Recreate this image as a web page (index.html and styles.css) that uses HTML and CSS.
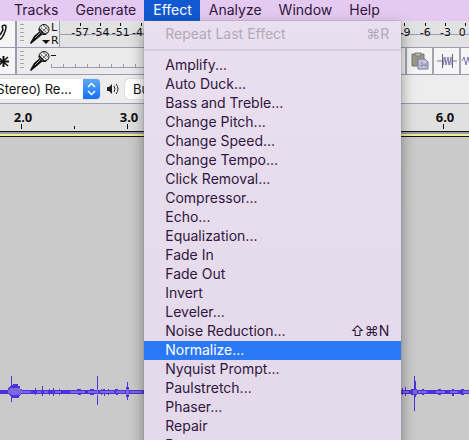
FILE: index.html
```
<!DOCTYPE html>
<html lang="en">
<head>
<meta charset="utf-8">
<title>Audacity</title>
<link rel="stylesheet" href="styles.css">
</head>
<body>
<svg class="defs" width="0" height="0" aria-hidden="true">
  <symbol id="mic" viewBox="0 0 20 20">
    <path d="M0 19L4 12L10 7L13 10L7 15L1 20Z" fill="#111"/>
    <path d="M5 14L10 9" stroke="#aaa" stroke-width="1"/>
    <circle cx="14" cy="5.500" r="5" fill="#ddd" stroke="#111"/>
    <path d="M11 3L17 9M13 1L18 6M9.500 5L14 10M17 3L11 9M14 2L10 6" stroke="#777" stroke-width="1"/>
    <path d="M9 5L14 10L16 10" fill="none" stroke="#111" stroke-width="1.500"/>
    <path d="M12 3L14 4" stroke="#fff" stroke-width="2"/>
  </symbol>
</svg>

<nav class="menubar">
  <button>Tracks</button>
  <button>Generate</button>
  <div class="open">
    <button class="active">Effect</button>
    <div class="menu">
      <button class="disabled" disabled>Repeat Last Effect<kbd>⌘R</kbd></button>
      <hr>
      <button>Amplify...</button>
      <button>Auto Duck...</button>
      <button>Bass and Treble...</button>
      <button>Change Pitch...</button>
      <button>Change Speed...</button>
      <button>Change Tempo...</button>
      <button>Click Removal...</button>
      <button>Compressor...</button>
      <button>Echo...</button>
      <button>Equalization...</button>
      <button>Fade In</button>
      <button>Fade Out</button>
      <button>Invert</button>
      <button>Leveler...</button>
      <button>Noise Reduction...<kbd>⇧⌘N</kbd></button>
      <button class="selected">Normalize...</button>
      <button>Nyquist Prompt...</button>
      <button>Paulstretch...</button>
      <button>Phaser...</button>
      <button>Repair</button>
      <button>Repeat...</button>
    </div>
  </div>
  <button>Analyze</button>
  <button>Window</button>
  <button>Help</button>
</nav>

<div class="bar">
  <button class="tool" aria-label="Draw tool"><svg width="15" height="26" viewBox="0 0 15 26"><path d="M2 5Q6 3 6 6Q6 10 3 15Q1 19 -2 19M2 5L3 9L0 14" fill="none" stroke="#111" stroke-width="1.500"/></svg></button>
  <span class="grip"></span>
  <svg class="mic" width="20" height="20"><use href="#mic"/><path d="M12 16H20L16 20Z" fill="#111"/></svg>
  <div class="channels"><span>L</span><span>R</span></div>
  <div class="meter">
    <span>-57</span><span>-54</span><span>-51</span><span>-48</span><span></span><span></span><span></span><span></span><span></span><span></span><span></span><span></span><span></span><span></span><span></span><span></span><span>-9</span><span>-6</span><span>-3</span><span class="zero">0</span>
  </div>
</div>

<div class="bar">
  <button class="tool" aria-label="Multi tool"><svg width="15" height="26" viewBox="0 0 15 26"><path d="M3.500 8V19M-2 13.500H9" stroke="#111" stroke-width="2"/><path d="M-2 9L8 18M8 9L-2 18" stroke="#111" stroke-width="1.500"/></svg></button>
  <span class="grip"></span>
  <svg class="mic" width="20" height="20"><use href="#mic"/></svg>
  <div class="slider"><span class="minus"></span><span class="ticks"></span></div>
  <div class="edit">
    <button aria-label="Copy"></button>
    <button aria-label="Paste"><svg width="18" height="18" viewBox="0 0 18 18"><path d="M1 2H13V14H1Z" fill="#999a80" stroke="#777"/><path d="M4 1H10V4H4Z" fill="#bbb" stroke="#777"/><path d="M7 7H14L17 10V17H7Z" fill="#c4c4dc" stroke="#77779c"/><path d="M9 13V14M11 10V15M13 12V14M15 11V15" stroke="#77779c"/></svg></button>
    <button aria-label="Trim"><svg width="20" height="18" viewBox="0 0 20 18"><path d="M0 9H5M15 9H20M6 5V13L8 5L9 13L11 5L12 13L14 5V13" fill="none" stroke="#7777b4"/><path d="M5.500 2V16M15.500 2V16" stroke="#666"/></svg></button>
    <button aria-label="Silence"><svg width="20" height="18" viewBox="0 0 20 18"><path d="M1 9L3 5L5 13L7 5L9 13L10 9H20" fill="none" stroke="#7777b4"/></svg></button>
  </div>
</div>

<div class="bar devices">
  <label class="pick first"><select aria-label="Recording channels"><option>2 (Stereo) Re...</option></select>
    <svg width="17" height="20" viewBox="0 0 17 20"><path d="M5 8L8.500 4.500L12 8M5 12L8.500 15.500L12 12" fill="none" stroke="#fff" stroke-width="1.500"/></svg></label>
  <svg class="speaker" width="14" height="14" viewBox="0 0 14 14"><path d="M1 5H3L6 2V12L3 9H1Z" fill="#222"/><path d="M8 4Q10 7 8 10M10 2Q14 7 10 12" fill="none" stroke="#222"/></svg>
  <label class="pick second"><select aria-label="Playback device"><option>Built-in Output</option></select></label>
</div>

<div class="ruler"><svg width="100%" height="27" aria-label="Timeline">
  <g stroke="#111"><path d="M21.500 20V25M74.500 22V25M127.500 20V25M180.500 22V25M232.500 20V25M285.500 22V25M338.500 20V25M391.500 22V25M443.500 20V25"/></g>
  <g class="time"><text x="23" y="18">2.0</text><text x="129" y="18">3.0</text><text x="445" y="18">6.0</text></g>
</svg></div>
<div class="selection"></div>
<main class="track">
  <svg class="wave" width="100%" height="40" shape-rendering="crispEdges">
    <path class="peak" d="M0 18H469V22H0Z M8 17L10 14H12L13 12H18V14H20V17H22V22L19 24V26H13L11 25L9 23Z M11 4H12V30H11Z M35 16h1v7h-1z M42 14h1v10h-1z M49 17h1v6h-1z M53 16h1v8h-1z M59 17h1v6h-1z M77 17h4v6h-3z M90 17h4v6h-4z M97 4h1v29h-1z M101 17h1v6h-1z M103 17h2v7h-1z M108 17h1v6h-1z M115 17h3v6h-2z M126 15h3v10h-3z M127 10h1v18h-1z M402 16h1v7h-1z M405 15h1v9h-1z M411 17h6v6h-6z M414 4h1v35h-1z M415 9h1v16h-1z M422 17h2v6h-2z M438 17h3v6h-3z M452 17h2v7h-2z M461 17h3v6h-3z"/>
    <path class="rms" d="M8 18L11 16H19L22 18V21L19 23H12L8 21Z M22 19h9v2h-9z M37 19h4v2h-4z M44 19h4v2h-4z M55 19h6v2h-6z M70 19h15v2h-15z M88 19h9v2h-9z M97 17h1v7h-1z M100 19h14v2h-14z M116 19h9v2h-9z M126 17h3v6h-3z M130 19h12v2h-12z M403 19h6v2h-6z M413 18h4v4h-4z M418 19h9v2h-9z M436 19h9v2h-9z M450 19h8v2h-8z M463 19h6v2h-6z"/>
  </svg>
</main>
</body>
</html>
```
FILE: styles.css
```
* { box-sizing: border-box; }
body {
  margin: 0;
  min-height: 100vh;
  display: flex;
  flex-direction: column;
  overflow: hidden;
  background: #cacaca;
  font: 14px/20px Inter, "Liberation Sans", sans-serif;
  color: #2c2032;
}
button, select { font: inherit; color: inherit; border: 0; padding: 0; background: none; }
.defs { position: absolute; }

.menubar { display: flex; height: 21px; padding-left: 5px; background: #e4caf1; color: #301640; }
.menubar > button, .open > button { height: 21px; padding: 0 8px 2px 9px; }
.open { position: relative; }
.open > .active { background: #1059d0; color: #fff; }
.menu {
  position: absolute;
  z-index: 2;
  top: 21px;
  left: 0;
  width: 257px;
  padding-top: 4px;
  background: linear-gradient(#e9dfef, #e4d9ea);
  box-shadow: 0 0 1px #777, 0 6px 14px #0006;
}
.menu button { display: flex; align-items: center; width: 100%; height: 19px; padding: 0 12px 2px 21px; }
.menu hr { height: 2px; margin: 5px 0; border: 0; background: #d6cddb; }
.menu kbd { margin-left: auto; font: inherit; }
.menu .disabled { color: #b2a9b8; }
.menu .selected { background: #2a78f6; color: #fff; }

.bar { display: flex; align-items: center; height: 27px; background: #ebebeb; border-bottom: 1px solid #9c9cb0; }
.tool { flex: none; width: 17px; height: 100%; background: #f5f5f5; border-right: 2px solid #9c9cb0; }
.tool svg { display: block; }
.grip { flex: none; width: 4px; height: 20px; margin: 0 6px 0 3px; background: repeating-linear-gradient(#a6a6b4 0 1px, #ebebeb 1px 4px); }
.mic { flex: none; }
.channels { display: flex; flex-direction: column; flex: none; width: 9px; padding-left: 1px; font: 11px/13px "DejaVu Sans", sans-serif; color: #111; }
.meter {
  display: flex;
  flex: 1;
  height: 26px;
  margin-right: -7px;
  padding-left: 10px;
  font: 11px/24px "DejaVu Sans", sans-serif;
  color: #111;
  border-left: 1px solid #9c9cb0;
  background: linear-gradient(#9c9cb0, #9c9cb0) 0 13px / 100% 1px no-repeat #e2e2e2;
}
.meter span { flex: 1 1 0; display: flex; justify-content: center; background: linear-gradient(#111, #111) center 2px / 1px 3px no-repeat; }
.meter .zero { justify-content: flex-start; text-indent: 3px; }
.slider { flex: 1; display: flex; flex-direction: column; justify-content: space-between; height: 13px; padding-left: 1px; }
.minus { width: 5px; height: 1px; background: #111; }
.ticks { height: 4px; border-bottom: 1px solid #9c9cb0; background: repeating-linear-gradient(90deg, #9c9cb0 0 1px, transparent 1px 12px); }
.edit { display: flex; flex: none; width: 89px; height: 100%; gap: 2px; overflow: hidden; background: #a4a4ac; }
.edit button { display: flex; flex: none; align-items: center; justify-content: center; width: 25px; background: #f5f5f5; }
.edit button:last-child { justify-content: flex-start; }

.devices { height: 29px; background: #ededed; font-size: 13px; overflow: hidden; }
.pick { display: grid; flex: none; height: 20px; overflow: hidden; background: #fff; border-radius: 4px; box-shadow: 0 0 1px #777; color: #111; }
.pick > * { grid-area: 1 / 1; }
.pick select { appearance: none; width: 100%; height: 20px; padding-left: 8px; }
.pick svg { justify-self: end; background: linear-gradient(#5ba8fa, #166ff2); }
.first { width: 128px; margin-left: -28px; }
.speaker { flex: none; margin: 0 5px 0 6px; }
.second { width: 180px; }

.ruler { height: 28px; background: #e0e0e0; border-bottom: 1px solid #111; }
.ruler svg { display: block; }
.time { font: bold 13px "Noto Sans", sans-serif; text-anchor: middle; fill: #111; }
.selection { height: 5px; background: #f0f08c; border: solid #9c9cb0; border-width: 2px 0 1px; border-bottom-color: #111; }
.track { flex: 1; padding-top: 235px; }
.wave { display: block; }
.peak { fill: #5030d8; }
.rms { fill: #7a68e0; }
```
